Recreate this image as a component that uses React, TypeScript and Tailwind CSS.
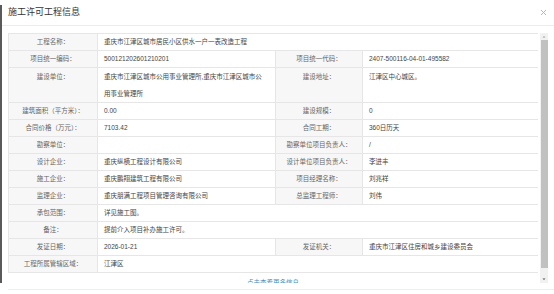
import React from 'react';

type Cell = { label: string; value?: string; span?: boolean };
type Row = { cells: Cell[]; tall?: boolean };

const ROWS: Row[] = [
  { cells: [{ label: '工程名称：', value: '重庆市江津区城市居民小区供水一户一表改造工程', span: true }] },
  { cells: [{ label: '项目统一编码：', value: '500121202601210201' }, { label: '项目统一代码：', value: '2407-500116-04-01-495582' }] },
  {
    tall: true,
    cells: [
      { label: '建设单位：', value: '重庆市江津区城市公用事业管理所,重庆市江津区城市公用事业管理所' },
      { label: '建设地址：', value: '江津区中心城区。' },
    ],
  },
  { cells: [{ label: '建筑面积（平方米）：', value: '0.00' }, { label: '建设规模：', value: '0' }] },
  { cells: [{ label: '合同价格（万元）：', value: '7103.42' }, { label: '合同工期：', value: '360日历天' }] },
  { cells: [{ label: '勘察单位：', value: '' }, { label: '勘察单位项目负责人：', value: '/' }] },
  { cells: [{ label: '设计企业：', value: '重庆纵横工程设计有限公司' }, { label: '设计单位项目负责人：', value: '李进丰' }] },
  { cells: [{ label: '施工企业：', value: '重庆鹏翔建筑工程有限公司' }, { label: '项目经理名称：', value: '刘兆祥' }] },
  { cells: [{ label: '监理企业：', value: '重庆朋满工程项目管理咨询有限公司' }, { label: '总监理工程师：', value: '刘伟' }] },
  { cells: [{ label: '承包范围：', value: '详见施工图。', span: true }] },
  { cells: [{ label: '备注：', value: '提前介入项目补办施工许可。', span: true }] },
  { cells: [{ label: '发证日期：', value: '2026-01-21' }, { label: '发证机关：', value: '重庆市江津区住房和城乡建设委员会' }] },
  { cells: [{ label: '工程所属管辖区域：', value: '江津区', span: true }] },
];

export default function App() {
  return (
    <div
      className="w-[554px] h-[294px] bg-white flex overflow-hidden text-[#333]"
      style={{ fontFamily: '"Liberation Sans", "Noto Sans CJK SC", sans-serif' }}
    >
      <div className="w-[2px] mt-[5px] h-[278px] bg-[#5a5a5a] shrink-0" />
      <div className="flex-1 flex flex-col">
        {/* header */}
        <div className="h-[26px] border-b border-[#ececec] flex items-center justify-between pl-[6px] pr-[6px]">
          <span className="text-[9px] text-[#333] leading-none">施工许可工程信息</span>
          <svg width="7" height="7" viewBox="0 0 7 7" className="mr-[1px]">
            <path d="M1 1L6 6M6 1L1 6" stroke="#b5b5b5" strokeWidth="1" />
          </svg>
        </div>

        {/* body */}
        <div className="pt-[7px] pl-[6px] flex gap-[2px]">
          <div className="w-[530px] h-[250px] overflow-hidden">
            <table className="w-[530px] table-fixed border-collapse text-[6.5px]">
              <colgroup>
                <col className="w-[89px]" />
                <col className="w-[178px]" />
                <col className="w-[87px]" />
                <col className="w-[176px]" />
              </colgroup>
              <tbody>
                {ROWS.map((row, i) => (
                  <tr key={i} className={row.tall ? 'h-[34px]' : 'h-[17px]'}>
                    {row.cells.map((c, j) => (
                      <React.Fragment key={j}>
                        <td
                          className={`border border-[#e6e6e6] bg-[#f7f7f7] text-center text-[#666] px-[2px] whitespace-nowrap ${
                            row.tall ? 'align-top leading-[17px]' : 'leading-[16px]'
                          }`}
                        >
                          {c.label}
                        </td>
                        <td
                          colSpan={c.span ? 3 : 1}
                          className={`border border-[#e6e6e6] bg-white pl-[6px] pr-[10px] text-[#444] ${
                            row.tall ? 'align-top leading-[17px]' : 'leading-[16px] whitespace-nowrap'
                          }`}
                        >
                          {c.value}
                        </td>
                      </React.Fragment>
                    ))}
                  </tr>
                ))}
              </tbody>
            </table>
            <div className="pt-[4px] text-center text-[6.5px] text-[#3c8dbc] leading-[12px]">点击查看更多信息</div>
          </div>

          {/* scrollbar */}
          <div className="w-[8px] h-[250px] bg-[#f1f1f1] flex flex-col items-center">
            <svg width="8" height="7" viewBox="0 0 8 7" className="shrink-0">
              <path d="M2.5 4.5L4 3L5.5 4.5Z" fill="#a0a0a0" />
            </svg>
            <div className="w-[7px] h-[228px] bg-[#c1c1c1]" />
            <div className="flex-1" />
            <svg width="8" height="7" viewBox="0 0 8 7" className="shrink-0">
              <path d="M2.5 2.5L4 4L5.5 2.5Z" fill="#505050" />
            </svg>
          </div>
        </div>

        <div className="mt-[6px] ml-[6px] border-t border-[#eeeeee]" />
      </div>
    </div>
  );
}
